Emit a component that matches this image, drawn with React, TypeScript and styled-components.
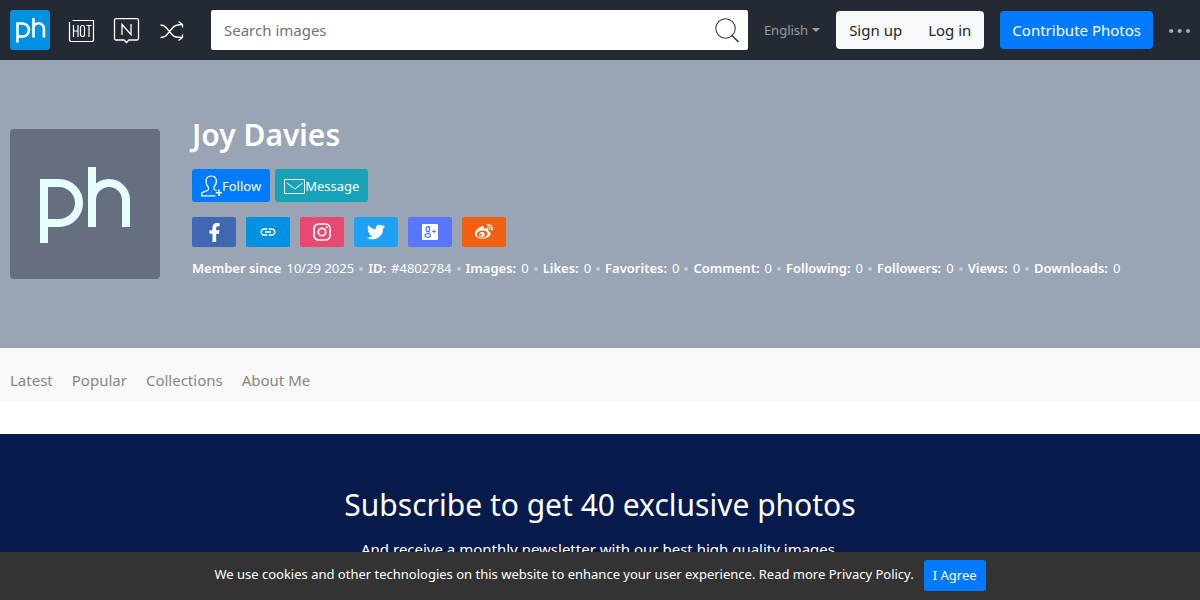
import React from "react";
import styled, { createGlobalStyle } from "styled-components";
import { FaFacebookF, FaTwitter, FaWeibo } from "react-icons/fa";
import { MdLink } from "react-icons/md";

const GlobalStyle = createGlobalStyle`
  *, *::before, *::after { box-sizing: border-box; }
  body {
    margin: 0;
    background: #fff;
    color: #212529;
    font: 15px/24px "Segoe UI", "Noto Sans", "Open Sans", sans-serif;
  }
  a { color: inherit; text-decoration: none; }
  button, input { font: inherit; }
  svg { display: block; flex: none; }
`;

const Header = styled.header`
  display: flex;
  align-items: center;
  height: 60px;
  padding: 0 10px;
  background: #242a34;
`;

const Logo = styled.a`
  width: 40px;
  height: 40px;
  margin-right: 18px;
  border-radius: 3px;
  background: #0092e0;
`;

const IconNav = styled.nav`
  display: flex;
  gap: 18px;
  margin-right: 26px;
  padding-top: 2px;
  color: #fff;
`;

const Search = styled.form`
  display: flex;
  flex: 1;
  min-width: 0;
  height: 40px;
  border-radius: 2px;
  background: #fff;
`;

const SearchInput = styled.input`
  flex: 1;
  min-width: 0;
  padding: 0 13px;
  border: 0;
  background: transparent;
  outline-color: #007bff;
  &::placeholder { color: #6c757d; opacity: 1; }
`;

const SearchButton = styled.button`
  padding: 0 8px;
  border: 0;
  background: transparent;
  color: #343a40;
`;

const Language = styled.button`
  display: flex;
  align-items: center;
  gap: 4px;
  margin: 0 16px;
  padding: 0;
  border: 0;
  background: transparent;
  color: #9a9da2;
  font-size: 13px;
  &::after {
    content: "";
    border: 4px solid transparent;
    border-top-color: currentColor;
    border-bottom: 0;
  }
`;

const Account = styled.div`
  display: flex;
  margin-right: 16px;
  border-radius: 4px;
  background: #f8f9fa;
`;

const NavButton = styled.a<{ $primary?: boolean }>`
  padding: 7px ${(p) => (p.$primary ? 12 : 13)}px;
  border-radius: 4px;
  background: ${(p) => (p.$primary ? "#007bff" : "transparent")};
  color: ${(p) => (p.$primary ? "#fff" : "#212529")};
  white-space: nowrap;
`;

const More = styled.button`
  margin-left: 16px;
  padding: 2px 0 0;
  border: 0;
  background: transparent;
  color: #a7aaae;
`;

const Hero = styled.section`
  display: flex;
  align-items: center;
  gap: 32px;
  min-height: 288px;
  padding: 0 10px;
  background: #99a4b4;
  color: #fff;
`;

const Avatar = styled.div`
  flex: none;
  width: 150px;
  height: 150px;
  border-radius: 4px;
  background: #666f80;
`;

const Profile = styled.div`
  padding-bottom: 13px;
`;

const Name = styled.h1`
  margin: 0 0 15px;
  font-size: 30px;
  font-weight: 600;
  line-height: 38px;
`;

const Row = styled.div<{ $gap: number }>`
  display: flex;
  gap: ${(p) => p.$gap}px;
`;

const Action = styled.button<{ $color: string }>`
  display: flex;
  align-items: center;
  height: 33px;
  padding: 0 9px;
  border: 0;
  border-radius: 3px;
  background: ${(p) => p.$color};
  color: #fff;
  font-size: 13px;
`;

const Socials = styled(Row)`
  margin: 15px 0 11px;
`;

const Social = styled.a<{ $color: string }>`
  display: grid;
  place-items: center;
  width: 44px;
  height: 30px;
  border-radius: 2px;
  background: ${(p) => p.$color};
`;

const Stats = styled.ul`
  display: flex;
  flex-wrap: wrap;
  margin: 0;
  padding: 0;
  list-style: none;
  font-size: 13px;
  line-height: 21px;
`;

const Stat = styled.li`
  display: flex;
  align-items: center;
  gap: 5px;
  & + &::before {
    content: "";
    width: 4px;
    height: 4px;
    margin-left: 5px;
    border-radius: 50%;
    background: #c3cad5;
  }
`;

const StatLabel = styled.b`
  font-weight: 600;
`;

const Tabs = styled.nav`
  display: flex;
  flex-wrap: wrap;
  gap: 19px;
  margin-bottom: 32px;
  padding: 20px 10px 10px;
  background: #f9f9f9;
  color: #868686;
`;

const Subscribe = styled.section`
  min-height: 240px;
  padding: 51px 20px;
  background: #061a4b;
  color: #fff;
  text-align: center;
`;

const SubscribeTitle = styled.h2`
  margin: 0 0 12px;
  font-size: 30px;
  font-weight: 400;
  line-height: 40px;
`;

const SubscribeText = styled.p`
  margin: 0;
`;

const CookieBar = styled.div`
  position: fixed;
  right: 0;
  bottom: 0;
  left: 0;
  display: flex;
  align-items: center;
  justify-content: center;
  gap: 10px;
  min-height: 48px;
  padding-bottom: 2px;
  background: #333;
  color: #fff;
  font-size: 13px;
`;

const CookieText = styled.span`
  padding-bottom: 3px;
`;

const Agree = styled.button`
  height: 31px;
  padding: 0 9px;
  border: 0;
  border-radius: 3px;
  background: #007bff;
  color: #fff;
`;

const LogoMark = () => (
  <svg width="150" height="150" viewBox="0 0 150 150" fill="none" stroke="#e8ffff" strokeWidth="8">
    <path d="M34 114V54H49a20 20 0 0 1 0 40H34" />
    <path d="M82 38V98M82 74V71a17 17 0 0 1 34 0V98" />
  </svg>
);

const BrandMark = () => (
  <svg width="40" height="40" viewBox="0 0 40 40" fill="none" stroke="#fff" strokeWidth="2.600">
    <path d="M7.500 32.500V13.500h5a6.500 6.500 0 0 1 0 13H7.500M23.500 8V27.500M23.500 19v-.5a5.200 5.200 0 0 1 10.400 0V27.500" />
  </svg>
);

const HotIcon = () => (
  <svg width="27" height="26" viewBox="0 0 27 26" fill="none" stroke="currentColor" strokeWidth="1.200">
    <path d="M1.500 4V21.500a2 2 0 0 0 2 2H23.500a2 2 0 0 0 2-2V2.500H4.500" />
    <path d="M5.500 7v12M10 7v12M5.500 13H10M18.500 7.500h5M21 7.500V19" />
    <rect x="12.500" y="7.500" width="4" height="11" rx="2" />
  </svg>
);

const NewIcon = () => (
  <svg width="27" height="26" viewBox="0 0 27 26" fill="none" stroke="currentColor" strokeWidth="1.300">
    <path d="M3 .700H24a1.500 1.500 0 0 1 1.500 1.500V20.500a1.500 1.500 0 0 1-1.500 1.500H16L13.500 24.500 11 22H3a1.500 1.500 0 0 1-1.500-1.500V2.200A1.500 1.500 0 0 1 3 .700Z" />
    <path d="M9 17V6.500l9 10V6" />
  </svg>
);

const ShuffleIcon = () => (
  <svg width="27" height="26" viewBox="0 0 27 26" fill="none" stroke="currentColor" strokeWidth="1.300">
    <path d="M2.500 7c2 0 4 .5 5.500 2.500l6.500 7.500c2 2.500 4.500 2.500 9.500 2.500M2.500 19.500c3 0 5-1 7-3.500l5-6c2-2.500 4.500-3.500 9.500-3.500" />
    <path d="M20.500 3.500l4 3v3M20.500 22.500l4-3v-3" />
  </svg>
);

const SearchIcon = () => (
  <svg width="25" height="26" viewBox="0 0 25 26" fill="none" stroke="currentColor" strokeWidth="1.100">
    <circle cx="10.500" cy="11.500" r="9.700" />
    <path d="m16.500 18 7 7" strokeWidth="1.600" />
  </svg>
);

const DotsIcon = () => (
  <svg width="21" height="6" viewBox="0 0 21 6" fill="currentColor">
    <circle cx="2.200" cy="3" r="2.100" />
    <circle cx="10.700" cy="3" r="2.100" />
    <circle cx="19" cy="3" r="2" />
  </svg>
);

const FollowIcon = () => (
  <svg width="21" height="22" viewBox="0 0 21 22" fill="none" stroke="currentColor" strokeWidth="1.200">
    <path d="M14.500 20.800H.700v-2.800c2-2 5.800-1.500 6.800-3.500v-2C3.800 8 4 1 10.200 1s6.500 7 2.800 11v2c.6 1.200 1.800 1.300 3 1.700" />
    <path d="M18 14.500v6.500M14.800 17.800h6.200" strokeWidth="1.500" />
  </svg>
);

const MailIcon = () => (
  <svg width="21" height="22" viewBox="0 0 21 22" fill="none" stroke="currentColor" strokeWidth="1">
    <path d="M.500 4.500h20v14H.500ZM3 8l8 6 7.500-6" />
  </svg>
);

const InstagramIcon = () => (
  <svg width="18" height="18" viewBox="0 0 18 18" fill="none" stroke="#fff" strokeWidth="1.700">
    <rect x="1" y="1" width="16" height="16" rx="4.500" />
    <circle cx="9" cy="9" r="3.700" />
    <circle cx="13.700" cy="4.300" r="1" fill="#fff" stroke="none" />
  </svg>
);

const GooglePlusIcon = () => (
  <svg width="16" height="16" viewBox="0 0 16 16" fill="none" stroke="#5677fc" strokeWidth="1.200">
    <rect width="16" height="16" rx="1" fill="#fff" stroke="none" />
    <ellipse cx="5.800" cy="5.200" rx="1.800" ry="2.300" />
    <path d="M5.500 2.700H8.500M7 7.200c1.800 1.500.5 1.800-1 2.300M10 7.500h4M12 5.500v4" strokeWidth="1" />
    <ellipse cx="5.700" cy="11.500" rx="2.800" ry="1.900" />
  </svg>
);

const socials = [
  { name: "Facebook", color: "#4267b2", icon: <FaFacebookF size={19} /> },
  { name: "Website", color: "#0092e0", icon: <MdLink size={18} /> },
  { name: "Instagram", color: "#e94970", icon: <InstagramIcon /> },
  { name: "Twitter", color: "#1da1f2", icon: <FaTwitter size={18} /> },
  { name: "Google Plus", color: "#5677fc", icon: <GooglePlusIcon /> },
  { name: "Weibo", color: "#f26110", icon: <FaWeibo size={18} /> },
];

const stats = [
  ["Member since", "10/29 2025"],
  ["ID:", "#4802784"],
  ["Images:", "0"],
  ["Likes:", "0"],
  ["Favorites:", "0"],
  ["Comment:", "0"],
  ["Following:", "0"],
  ["Followers:", "0"],
  ["Views:", "0"],
  ["Downloads:", "0"],
];

export default function App() {
  return (
    <>
      <GlobalStyle />
      <Header>
        <Logo href="#" aria-label="Home"><BrandMark /></Logo>
        <IconNav>
          <a href="#hot" aria-label="Hot"><HotIcon /></a>
          <a href="#new" aria-label="New"><NewIcon /></a>
          <a href="#random" aria-label="Random"><ShuffleIcon /></a>
        </IconNav>
        <Search role="search">
          <SearchInput type="text" placeholder="Search images" aria-label="Search images" />
          <SearchButton type="button" aria-label="Search"><SearchIcon /></SearchButton>
        </Search>
        <Language type="button">English</Language>
        <Account>
          <NavButton href="#signup">Sign up</NavButton>
          <NavButton href="#login">Log in</NavButton>
        </Account>
        <NavButton href="#contribute" $primary>Contribute Photos</NavButton>
        <More type="button" aria-label="More"><DotsIcon /></More>
      </Header>
      <main>
        <Hero>
          <Avatar><LogoMark /></Avatar>
          <Profile>
            <Name>Joy Davies</Name>
            <Row $gap={5}>
              <Action type="button" $color="#007bff"><FollowIcon />Follow</Action>
              <Action type="button" $color="#17a2b8"><MailIcon />Message</Action>
            </Row>
            <Socials $gap={10}>
              {socials.map((s) => (
                <Social key={s.name} href="#" aria-label={s.name} $color={s.color}>{s.icon}</Social>
              ))}
            </Socials>
            <Stats>
              {stats.map(([label, value]) => (
                <Stat key={label}><StatLabel>{label}</StatLabel><span>{value}</span></Stat>
              ))}
            </Stats>
          </Profile>
        </Hero>
        <Tabs>
          <a href="#latest">Latest</a>
          <a href="#popular">Popular</a>
          <a href="#collections">Collections</a>
          <a href="#about">About Me</a>
        </Tabs>
        <Subscribe>
          <SubscribeTitle>Subscribe to get 40 exclusive photos</SubscribeTitle>
          <SubscribeText>And receive a monthly newsletter with our best high quality images.</SubscribeText>
        </Subscribe>
      </main>
      <CookieBar>
        <CookieText>
          We use cookies and other technologies on this website to enhance your user experience. Read more <a href="#privacy">Privacy Policy.</a>
        </CookieText>
        <Agree type="button">I Agree</Agree>
      </CookieBar>
    </>
  );
}
